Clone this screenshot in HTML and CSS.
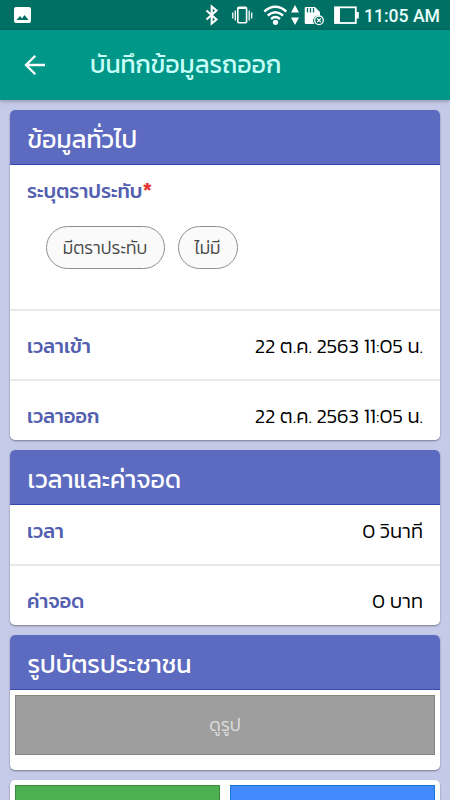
FILE: index.html
```html
<!DOCTYPE html>
<html lang="th">
<head>
    <meta charset="UTF-8">
    <meta name="viewport" content="width=device-width, initial-scale=1.0">
    <title>บันทึกข้อมูลรถออก</title>
    <link rel="stylesheet" href="styles.css">
</head>
<body>
    <div class="status-bar">
        <svg class="status-icons" width="360" height="30" viewBox="0 0 360 30">
            <path fill="#fff" fill-rule="evenodd" d="M16 7h13a2 2 0 0 1 2 2v12a2 2 0 0 1-2 2H16a2 2 0 0 1-2-2V9a2 2 0 0 1 2-2zM16.500 20h12l-4-5-2.500 3.500-2-2.500z"/>
            <path fill="none" stroke="#fff" stroke-width="2.100" d="M206.500 10.500l10 9-4.800 4V6.500l4.800 4-10 9"/>
            <g fill="none" stroke="#fff">
                <rect x="237.800" y="7.300" width="8.800" height="15.500" rx="1" stroke-width="1.600"/>
                <path stroke-width="1.300" d="M238 8.300h8M235.300 10.500v10M232.800 12.500v6M249.200 10.500v10M251.700 12.500v6"/>
                <path stroke-width="2.400" d="M264.300 11.500q11-9.500 22 0M267.700 15.500q7.700-6.500 15.400 0M271 19q4.500-3.800 9 0"/>
            </g>
            <g fill="#fff">
                <circle cx="275.500" cy="22.300" r="2.600"/>
                <path d="M295 5l4 7.500h-8zM295 25l4-7.500h-8z"/>
                <path d="M306 7h9l5 5v4a5 5 0 0 0-5.500 8H306q-1.300 0-1.300-1.300V8.300Q304.700 7 306 7z"/>
            </g>
            <path stroke="#006f64" stroke-width="1.300" d="M307.500 8v4.500M310.500 8v4.500M313.500 8v4.500"/>
            <circle cx="319" cy="20.300" r="4.300" fill="#006f64" stroke="#fff" stroke-width="1.300"/>
            <path stroke="#fff" stroke-width="1.300" d="M317.200 18.500l3.600 3.600M320.800 18.500l-3.600 3.600"/>
            <rect x="335" y="7.300" width="20.800" height="15.700" fill="none" stroke="#fff" stroke-width="1.800"/>
            <path fill="#fff" d="M335 7h5v16h-5zM356 12h2.800v6.500H356z"/>
        </svg>
        <span class="clock">11:05 AM</span>
    </div>
    <header class="toolbar">
        <svg class="back" width="22" height="22" viewBox="0 0 22 22">
            <path d="M21 11H2M11.300 1.700L2 11l9.300 9.300"/>
        </svg>
        <h1>บันทึกข้อมูลรถออก</h1>
    </header>

    <main>
        <section class="card">
            <h2>ข้อมูลทั่วไป</h2>
            <div class="seal">
                <div class="label">ระบุตราประทับ<span class="required">*</span></div>
                <div class="chips">
                    <button class="chip has-seal">มีตราประทับ</button>
                    <button class="chip no-seal">ไม่มี</button>
                </div>
            </div>
            <div class="row">
                <span class="label">เวลาเข้า</span>
                <span class="value">22 ต.ค. 2563 11:05 น.</span>
            </div>
            <div class="row">
                <span class="label">เวลาออก</span>
                <span class="value">22 ต.ค. 2563 11:05 น.</span>
            </div>
        </section>

        <section class="card">
            <h2>เวลาและค่าจอด</h2>
            <div class="row first">
                <span class="label">เวลา</span>
                <span class="value">0 วินาที</span>
            </div>
            <div class="row">
                <span class="label">ค่าจอด</span>
                <span class="value">0 บาท</span>
            </div>
        </section>

        <section class="card photo">
            <h2>รูปบัตรประชาชน</h2>
            <button class="view">ดูรูป</button>
        </section>

        <section class="card actions">
            <button class="action green"></button>
            <button class="action blue"></button>
        </section>
    </main>
</body>
</html>
```

FILE: styles.css
```css
* {
    box-sizing: border-box;
}
body {
    margin: 0;
    height: 800px;
    overflow: hidden;
    background-color: #c5cae9;
    font-family: Kanit, Prompt, "Noto Sans Thai", "Noto Sans", sans-serif;
    font-size: 20px;
    color: #000;
}
.status-bar {
    display: flex;
    justify-content: space-between;
    align-items: center;
    height: 30px;
    padding-right: 10px;
    background-color: #006f64;
}
.status-icons {
    flex: none;
}
.clock {
    font: 500 17.6px/22px Roboto, sans-serif;
    padding-top: 2px;
    color: #e8fffb;
    white-space: nowrap;
}
.toolbar {
    display: flex;
    align-items: center;
    height: 70px;
    padding-left: 24px;
    background-color: #009688;
    box-shadow: 0 1px 4px rgba(0, 0, 0, 0.3);
}
.back {
    fill: none;
    stroke: #fff;
    stroke-width: 2.3;
}
h1 {
    margin: 0 0 0 44px;
    font-size: 24.9px;
    font-weight: 400;
    line-height: 40px;
    color: #c8fff8;
    white-space: nowrap;
}
main {
    display: flex;
    flex-direction: column;
    gap: 10px;
    height: 700px;
    padding: 10px 10px 0;
    overflow: hidden;
}
.card {
    flex: none;
    background-color: #fff;
    border-radius: 5px;
    overflow: hidden;
    box-shadow: 0 1px 2px rgba(0, 0, 0, 0.4);
}
h2 {
    display: flex;
    align-items: center;
    height: 55px;
    margin: 0;
    padding: 4px 17px 0 17.5px;
    background-color: #5c6bc0;
    border-bottom: 1px solid #3949ab;
    font-size: 25px;
    font-weight: 400;
    color: #fff;
    white-space: nowrap;
}
.seal {
    height: 144px;
    padding: 10px 17px 0;
}
.seal .label {
    height: 30px;
    line-height: 32px;
}
.label {
    font-weight: 500;
    color: #5360b0;
    white-space: nowrap;
}
.required {
    font-weight: 600;
    color: #e53935;
    font-size: 22px;
    line-height: 20px;
}
.chips {
    display: flex;
    gap: 13px;
    padding: 21px 0 0 19px;
}
.chip {
    height: 43px;
    padding: 0 1px 0 0;
    border: 1px solid #8e8e8e;
    border-radius: 22px;
    background-color: #fafafa;
    font-family: inherit;
    font-size: 17.5px;
    font-weight: 300;
    color: #484848;
    white-space: nowrap;
}
.has-seal {
    width: 119px;
}
.no-seal {
    width: 60px;
}
.row {
    display: flex;
    justify-content: space-between;
    align-items: center;
    height: 70px;
    padding: 1px 17px 0;
    border-top: 2px solid #e8e8e8;
}
.row:last-child {
    height: 61px;
    padding-top: 10px;
}
.row.first {
    height: 59px;
    padding-top: 0;
    padding-bottom: 7px;
    border-top: 0;
}
.value {
    font-weight: 300;
    font-size: 20.2px;
    white-space: nowrap;
}
.photo {
    height: 135px;
}
.view {
    display: block;
    width: 420px;
    height: 60px;
    margin: 5px;
    padding: 0 0 1px;
    border: 1px solid #858585;
    background-color: #9e9e9e;
    font-family: inherit;
    font-size: 18px;
    font-weight: 300;
    color: #dedede;
}
.actions {
    display: flex;
    gap: 10px;
    height: 20px;
    padding: 5px 5px 0;
    border-radius: 5px 5px 0 0;
}
.action {
    flex: 1;
    padding: 0;
    border: 1px solid;
    border-bottom: 0;
}
.green {
    background-color: #4caf50;
    border-color: #388e3c;
}
.blue {
    background-color: #448aff;
    border-color: #1976d2;
}
```
